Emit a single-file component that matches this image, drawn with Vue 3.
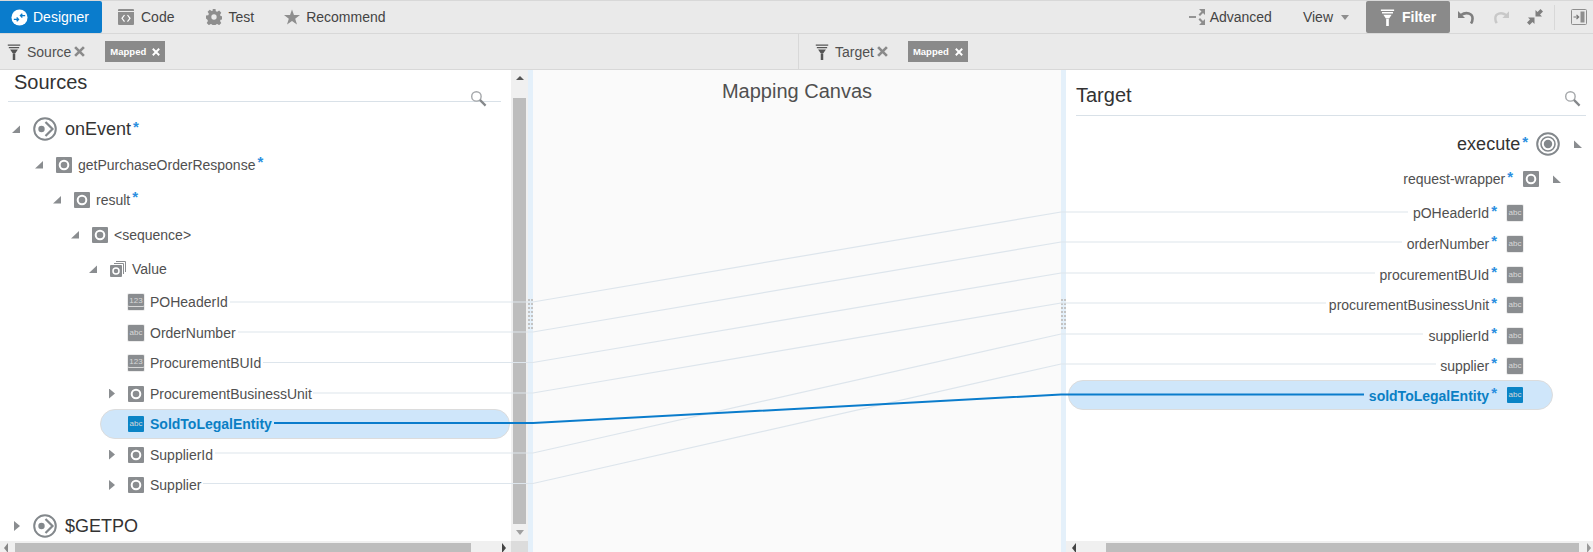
<template>
  <div class="page">
    <svg class="defs" width="0" height="0">
      <symbol id="i-node" viewBox="0 0 16 16">
        <rect width="16" height="16" rx="1" fill="#8a8d90" />
        <circle cx="8" cy="8" r="4.300" fill="none" stroke="#fff" stroke-width="2" />
      </symbol>
      <symbol id="i-stack" viewBox="0 0 16 16">
        <path d="M6 .5h9.500V11M4 2.500h9.500V13" fill="none" stroke="#8a8d90" />
        <rect y="4" width="12" height="12" rx="1" fill="#8a8d90" />
        <circle cx="6" cy="10" r="3" fill="none" stroke="#fff" stroke-width="1.500" />
      </symbol>
      <symbol id="i-event" viewBox="0 0 24 24">
        <circle cx="12" cy="12" r="10.800" fill="none" stroke="#83888c" stroke-width="2" />
        <circle cx="8.500" cy="12" r="3.200" fill="#83888c" />
        <path d="M12.500 5 19.500 12l-7 7" fill="none" stroke="#83888c" stroke-width="2.200" />
      </symbol>
      <symbol id="i-target" viewBox="0 0 24 24">
        <circle cx="12" cy="12" r="10.800" fill="none" stroke="#83888c" stroke-width="2" />
        <circle cx="12" cy="12" r="7" fill="none" stroke="#83888c" stroke-width="1.600" />
        <circle cx="12" cy="12" r="4.200" fill="#83888c" />
      </symbol>
      <symbol id="i-funnel" viewBox="0 0 14 18">
        <path d="M0 .5h14v1.500H0zM1.200 3.300h11.600v1.500H1.200zM2.600 6.100h8.800l-2.700 4H5.300zM5.600 10.500h2.800V18H5.600z" />
      </symbol>
      <symbol id="i-search" viewBox="0 0 18 18">
        <circle cx="6.800" cy="6.800" r="5" fill="none" stroke="#a5a8ab" stroke-width="1.500" />
        <path d="m10.500 10.500 6 6" stroke="#85888b" stroke-width="2.400" />
      </symbol>
      <symbol id="i-x" viewBox="0 0 10 10">
        <path d="m1 1 8 8M9 1 1 9" fill="none" stroke="currentColor" stroke-width="2.400" />
      </symbol>
    </svg>

    <header class="toolbar">
      <button class="tab tab-active">
        <svg class="designer-icon" viewBox="0 0 18 18">
          <circle cx="9" cy="9" r="8.500" fill="#fff" />
          <path d="M3 11h4.500M6 9l2 2-2 2M15 7h-4.500M12 5 10 7l2 2" fill="none" stroke="#0a7ccc" stroke-width="1.400" />
        </svg>
        Designer
      </button>
      <button class="tab">
        <svg class="tab-icon" viewBox="0 0 16 16">
          <rect width="16" height="16" rx="1" fill="#8e8e8e" />
          <rect y="2" width="16" height="1" fill="#ececec" />
          <path d="M6.500 6 4 9.300l2.500 3.300M9.500 6 12 9.300l-2.500 3.300" fill="none" stroke="#fff" stroke-width="1.200" />
        </svg>
        Code
      </button>
      <button class="tab">
        <svg class="tab-icon" viewBox="0 0 18 18">
          <path fill="#8e8e8e" fill-rule="evenodd" d="M7.300 0h3.400l.4 2.500 1.500.7 2.200-1.400 2.400 2.400-1.400 2.200.6 1.500 2.600.4v3.400l-2.600.4-.6 1.500 1.400 2.200-2.400 2.400-2.200-1.400-1.500.6-.4 2.600H7.300l-.4-2.600-1.500-.6-2.200 1.400-2.400-2.400 1.400-2.200-.6-1.500L0 10.700V7.300l2.600-.4.600-1.500-1.400-2.200 2.400-2.400 2.200 1.400 1.500-.7zM9 6a3 3 0 1 0 0 6 3 3 0 0 0 0-6z" />
        </svg>
        Test
      </button>
      <button class="tab">
        <svg class="tab-icon" viewBox="0 0 18 17">
          <path fill="#8e8e8e" d="m9 0 2.200 6.300H18l-5.400 4.100 2 6.600L9 13l-5.600 4 2-6.600L0 6.300h6.800z" />
        </svg>
        Recommend
      </button>

      <div class="toolbar-right">
        <button class="tool-text">
          <svg class="advanced-icon" viewBox="0 0 16 16">
            <path d="M0 8h7" stroke="#777" stroke-width="1.500" />
            <path d="M10 0h6v6l-2-2-3 3-1.500-1.500 3-3zM10 16h6v-6l-2 2-3-3-1.500 1.500 3 3z" fill="#8e8e8e" />
          </svg>
          Advanced
        </button>
        <button class="tool-text view-btn">View <span class="caret"></span></button>
        <button class="filter-btn">
          <svg class="filter-icon"><use href="#i-funnel" /></svg>
          Filter
        </button>
        <div class="tool-icons">
          <svg class="undo" viewBox="0 0 17 14">
            <path d="M0 1v7h7z" fill="#7f7f7f" />
            <path d="M3 5c5-3.500 12-2 11.500 4 0 2-.8 3.500-1.500 4.500" fill="none" stroke="#7f7f7f" stroke-width="2.600" />
          </svg>
          <svg class="redo" viewBox="0 0 17 14">
            <path d="M17 1v7h-7z" fill="#c8c8c8" />
            <path d="M14 5C9 1.500 2 3 2.500 9c0 2 .8 3.500 1.500 4.500" fill="none" stroke="#c8c8c8" stroke-width="2.600" />
          </svg>
          <svg class="shrink" viewBox="0 0 16 16">
            <path d="M13.500 0 16 2.500l-3 3 2 2H8.500V1l2 2zM2.500 16 0 13.500l3-3-2-2h6.500V15l-2-2z" fill="#7f7f7f" />
          </svg>
          <span class="tool-sep"></span>
          <svg class="shrink" viewBox="0 0 16 16">
            <rect x=".5" y=".5" width="15" height="15" rx="1" fill="none" stroke="#8e8e8e" />
            <rect x="9.500" y="2.500" width="4" height="11" fill="#8e8e8e" />
            <path d="M2.500 8h5M5.500 5.800 7.700 8l-2.200 2.200" fill="none" stroke="#777" stroke-width="1.200" />
          </svg>
        </div>
      </div>
    </header>

    <div class="filterbar">
      <div class="filter-left">
        <svg class="funnel"><use href="#i-funnel" /></svg>
        <span>Source</span>
        <svg class="x"><use href="#i-x" /></svg>
        <span class="chip">Mapped <svg class="chip-x"><use href="#i-x" /></svg></span>
      </div>
      <div class="filter-right">
        <svg class="funnel"><use href="#i-funnel" /></svg>
        <span>Target</span>
        <svg class="x"><use href="#i-x" /></svg>
        <span class="chip">Mapped <svg class="chip-x"><use href="#i-x" /></svg></span>
      </div>
    </div>

    <main class="mapper">
      <section class="source">
        <div class="panel-scroll">
          <div class="panel-head">
            <h2>Sources</h2>
            <svg class="search"><use href="#i-search" /></svg>
          </div>
          <div class="tree source-tree">
            <div
              v-for="row in sourceRows"
              :key="row.name"
              class="row"
              :class="{ selected: row.selected, big: row.icon === 'event' }"
              :style="{ height: row.h + 'px', paddingLeft: row.indent + 'px' }"
            >
              <span class="arrow" :class="row.arrow"></span>
              <span v-if="row.icon === 'abc' || row.icon === '123'" class="type" :class="'type-' + row.icon">{{ row.icon }}</span>
              <svg v-else class="node-icon"><use :href="'#i-' + row.icon" /></svg>
              <span class="label">{{ row.name }}</span>
              <span v-if="row.star" class="star-mark">*</span>
            </div>
          </div>
        </div>
        <div class="vbar">
          <span class="up"></span>
          <span class="thumb"></span>
          <span class="down"></span>
        </div>
        <div class="hbar">
          <span class="left"></span>
          <span class="hthumb"></span>
          <span class="right"></span>
        </div>
        <div class="corner"></div>
      </section>

      <div class="splitter"><i class="grip"></i></div>

      <section class="canvas">Mapping Canvas</section>

      <div class="splitter"><i class="grip"></i></div>

      <section class="target">
        <div class="panel-head">
          <h2>Target</h2>
          <svg class="search"><use href="#i-search" /></svg>
        </div>
        <div class="tree target-tree">
          <div
            v-for="row in targetRows"
            :key="row.name"
            class="row"
            :class="{ selected: row.selected, big: row.icon === 'target' }"
            :style="{ height: row.h + 'px', paddingRight: row.indent + 'px' }"
          >
            <span class="label">{{ row.name }}</span>
            <span class="star-mark">*</span>
            <span v-if="row.icon === 'abc'" class="type type-abc">abc</span>
            <svg v-else class="node-icon"><use :href="'#i-' + row.icon" /></svg>
            <span v-if="row.arrow" class="arrow mirror"></span>
          </div>
        </div>
        <div class="hbar">
          <span class="left"></span>
          <span class="hthumb"></span>
          <span class="right"></span>
        </div>
      </section>

      <!-- линии маппинга поверх всех колонок -->
      <svg class="links" width="1593" height="482" viewBox="0 70 1593 482">
        <path
          v-for="link in links"
          :key="link.d"
          :d="link.d"
          fill="none"
          :stroke="link.active ? '#0a7ccc' : '#dde5ec'"
          :stroke-width="link.active ? 2 : 1.200"
        />
      </svg>
    </main>
  </div>
</template>

<script setup>
const sourceRows = [
  { name: 'onEvent', icon: 'event', arrow: 'open', indent: 10, h: 36, star: true },
  { name: 'getPurchaseOrderResponse', icon: 'node', arrow: 'open', indent: 33, h: 35, star: true },
  { name: 'result', icon: 'node', arrow: 'open', indent: 51, h: 35, star: true },
  { name: '<sequence>', icon: 'node', arrow: 'open', indent: 69, h: 35 },
  { name: 'Value', icon: 'stack', arrow: 'open', indent: 87, h: 34 },
  { name: 'POHeaderId', icon: '123', arrow: 'none', indent: 105, h: 32 },
  { name: 'OrderNumber', icon: 'abc', arrow: 'none', indent: 105, h: 30 },
  { name: 'ProcurementBUId', icon: '123', arrow: 'none', indent: 105, h: 30 },
  { name: 'ProcurementBusinessUnit', icon: 'node', arrow: 'closed', indent: 105, h: 31 },
  { name: 'SoldToLegalEntity', icon: 'abc', arrow: 'none', indent: 105, h: 30, selected: true },
  { name: 'SupplierId', icon: 'node', arrow: 'closed', indent: 105, h: 31 },
  { name: 'Supplier', icon: 'node', arrow: 'closed', indent: 105, h: 30 },
  { name: '$GETPO', icon: 'event', arrow: 'closed', indent: 10, h: 52 },
]

const targetRows = [
  { name: 'execute', icon: 'target', arrow: true, indent: 9, h: 36 },
  { name: 'request-wrapper', icon: 'node', arrow: true, indent: 30, h: 34 },
  { name: 'pOHeaderId', icon: 'abc', indent: 70, h: 30 },
  { name: 'orderNumber', icon: 'abc', indent: 70, h: 31 },
  { name: 'procurementBUId', icon: 'abc', indent: 70, h: 31 },
  { name: 'procurementBusinessUnit', icon: 'abc', indent: 70, h: 30 },
  { name: 'supplierId', icon: 'abc', indent: 70, h: 31 },
  { name: 'supplier', icon: 'abc', indent: 70, h: 29 },
  { name: 'soldToLegalEntity', icon: 'abc', indent: 70, h: 30, selected: true },
]

// x начала, y слева, y справа, x конца
const links = [
  [230, 302, 212, 1408],
  [238, 332, 242, 1402],
  [263, 362.500, 273, 1375],
  [313, 393, 303, 1326],
  [215, 453, 334, 1423],
  [203, 483.500, 364, 1436],
  [274, 423, 394.500, 1364, true],
].map(([x1, y1, y2, x2, active]) => ({
  d: `M${x1} ${y1}H533L1061 ${y2}H${x2}`,
  active,
}))
</script>

<style>
html,
body {
  margin: 0;
  background: #fff;
  overflow: hidden;
}
</style>

<style scoped>
.page {
  width: 1593px;
  height: 552px;
  display: flex;
  flex-direction: column;
  font-family: "Liberation Sans", Arial, sans-serif;
  font-size: 14px;
  color: #505050;
  overflow: hidden;
}

.defs {
  position: absolute;
}

button {
  font: inherit;
  color: inherit;
  background: none;
  border: 0;
  padding: 0;
  display: flex;
  align-items: center;
}

.toolbar {
  height: 32px;
  flex: none;
  display: flex;
  align-items: stretch;
  background: #eaeaea;
  border-top: 1px solid #d8d8d8;
  border-bottom: 1px solid #d8d8d8;
}

.tab {
  gap: 6px;
  color: #444;
}

.tab-active {
  width: 102px;
  padding-left: 11px;
  gap: 5px;
  background: #0a7ccc;
  color: #fff;
  border-radius: 0 2px 2px 0;
  margin-right: 16px;
}

.designer-icon {
  width: 17px;
  height: 17px;
}

.tab-icon {
  width: 16px;
  height: 16px;
}

.tab:nth-child(2) {
  gap: 7px;
  padding-right: 32px;
}

.tab:nth-child(3) {
  padding-right: 30px;
}

.toolbar-right {
  margin-left: auto;
  display: flex;
  align-items: stretch;
}

.tool-text {
  color: #444;
  gap: 5px;
}

.advanced-icon {
  width: 16px;
  height: 16px;
}

.view-btn {
  margin-left: 31px;
  gap: 8px;
}

.caret {
  width: 0;
  height: 0;
  border: 4.500px solid transparent;
  border-top: 5px solid #8e8e8e;
  border-bottom: 0;
}

.filter-btn {
  width: 84px;
  margin-left: 17px;
  padding-left: 14px;
  gap: 7px;
  background: #8a8a8a;
  color: #fff;
  font-weight: 700;
  border-radius: 2px;
  box-sizing: border-box;
}

.filter-icon {
  width: 15px;
  height: 17px;
  fill: #fff;
}

.tool-icons {
  width: 143px;
  padding-left: 8px;
  display: flex;
  align-items: center;
  gap: 18px;
  box-sizing: border-box;
}

.undo {
  width: 17px;
  height: 14px;
}

.redo {
  width: 16px;
  height: 14px;
}

.shrink {
  width: 16px;
  height: 16px;
}

.tool-sep {
  width: 1px;
  height: 25px;
  margin: 0 -2px 0 -7px;
  background: #d8d8d8;
}

.filterbar {
  height: 35px;
  flex: none;
  display: grid;
  grid-template-columns: 798px 1fr;
  background: #eaeaea;
  border-bottom: 1px solid #d8d8d8;
}

.filter-left,
.filter-right {
  display: flex;
  align-items: center;
  padding-left: 7px;
}

.filter-right {
  padding-left: 16px;
  border-left: 1px solid #d8d8d8;
}

.funnel {
  width: 14px;
  height: 16px;
  fill: #555;
  margin-right: 6px;
}

.x {
  width: 11px;
  height: 11px;
  margin-left: 3px;
  color: #8a8a8a;
}

.chip {
  width: 60px;
  height: 21px;
  margin-left: 20px;
  padding-left: 5px;
  box-sizing: border-box;
  display: flex;
  align-items: center;
  gap: 6px;
  background: #8a8a8a;
  color: #fff;
  font-size: 9.500px;
  font-weight: 700;
}

.chip-x {
  width: 8px;
  height: 8px;
}

.mapper {
  position: relative;
  flex: 1;
  min-height: 0;
  display: flex;
  background: #fff;
}

.source {
  width: 528px;
  flex: none;
  display: grid;
  grid-template-columns: 511px 17px;
  grid-template-rows: 471px 11px;
}

.panel-scroll {
  min-height: 0;
  overflow: hidden;
}

.target {
  width: 527px;
  flex: none;
  display: flex;
  flex-direction: column;
}

.panel-head {
  position: relative;
  box-sizing: border-box;
  border-bottom: 1px solid #d9e1e8;
}

.source .panel-head {
  width: 493px;
  height: 32px;
  margin-left: 8px;
  padding-left: 6px;
}

.target .panel-head {
  height: 46px;
  margin: 0 7px 0 10px;
}

h2 {
  margin: 0;
  font-size: 20px;
  font-weight: 400;
  color: #333;
  line-height: 24px;
}

.target h2 {
  padding-top: 13px;
}

.search {
  position: absolute;
  width: 17px;
  height: 17px;
  right: 14px;
  bottom: -6px;
}

.target .search {
  right: 5px;
  bottom: 8px;
}

.source-tree {
  padding-top: 9px;
}

.target-tree {
  flex: 1;
  min-height: 0;
  padding-top: 10px;
}

.row {
  position: relative;
  display: flex;
  align-items: center;
  box-sizing: border-box;
  white-space: nowrap;
}

.row.big {
  font-size: 18px;
  color: #333;
}

.arrow {
  width: 10px;
  height: 10px;
  flex: none;
  margin-right: 13px;
}

.arrow.open {
  background: #8a8d90;
  clip-path: polygon(100% 15%, 100% 90%, 20% 90%);
}

.arrow.closed {
  background: #8a8d90;
  clip-path: polygon(40% 0, 100% 50%, 40% 100%);
}

.arrow.mirror {
  background: #8a8d90;
  clip-path: polygon(0 15%, 0 90%, 80% 90%);
  margin: 0 0 0 14px;
}

.node-icon {
  width: 16px;
  height: 16px;
  flex: none;
}

.big .node-icon {
  width: 24px;
  height: 24px;
}

.type {
  width: 16px;
  height: 16px;
  flex: none;
  border-radius: 1px;
  background: #8a8d90;
  color: #d8d8d8;
  font-size: 8px;
  line-height: 16px;
  text-align: center;
  box-shadow: 0 0 0 1px #ececec;
}

.type-123 {
  line-height: 13px;
  box-shadow: 0 0 0 1px #ececec, inset 0 -3px 0 #8a8d90, inset 0 -4px 0 #d8d8d8;
}

.label {
  margin-left: 6px;
}

.big .label {
  margin-left: 8px;
  padding-top: 1px;
}

.star-mark {
  color: #2b8fe0;
  font-size: 15px;
  font-weight: 700;
  line-height: 1;
  margin-left: 2px;
  margin-top: -6px;
}

.row.selected::before {
  content: "";
  position: absolute;
  top: 0;
  bottom: 0;
  box-sizing: border-box;
  background: #cfe6fa;
  border: 1px solid #dcdcdc;
  border-radius: 15px;
}

.source-tree .row.selected::before {
  left: 100px;
  width: 410px;
}

.target-tree .row.selected::before {
  left: 2px;
  width: 485px;
}

.row.selected > * {
  position: relative;
}

.selected .label {
  color: #0a7fc4;
  font-weight: 700;
}

.selected .type {
  background: #0a84c6;
  box-shadow: none;
}

.target-tree .row {
  justify-content: flex-end;
}

.target-tree .row:nth-child(2) {
  margin-bottom: 2px;
}

.target-tree .selected .label {
  padding-top: 2px;
}

.target-tree .label {
  margin-left: 0;
}

.target-tree .type,
.target-tree .node-icon {
  margin-left: 10px;
}

.target-tree .big .node-icon {
  margin-left: 8px;
}

.vbar {
  background: #f0f0f0;
  display: flex;
  flex-direction: column;
  align-items: center;
}

.up,
.down {
  width: 0;
  height: 0;
  border: 4px solid transparent;
}

.up {
  margin: 6px 0 18px;
  border-top: 0;
  border-bottom: 4px solid #555;
}

.thumb {
  flex: 1;
  width: 13px;
  background: #bdbdbd;
}

.down {
  margin: 6px 0 6px;
  border-bottom: 0;
  border-top: 5px solid #a0a0a0;
}

.corner {
  background: #dcdcdc;
}

.hbar {
  height: 11px;
  flex: none;
  display: flex;
  align-items: flex-end;
  background: #f0f0f0;
  overflow: hidden;
}

.left,
.right {
  width: 0;
  height: 0;
  margin-bottom: -1px;
  border: 5px solid transparent;
}

.left {
  margin-left: 4px;
  border-left: 0;
  border-right: 4px solid #888;
}

.right {
  margin-left: auto;
  margin-right: 5px;
  border-right: 0;
  border-left: 4px solid #444;
}

.target .left {
  margin-left: 6px;
  border-right-color: #444;
}

.target .right {
  margin-right: 2px;
  border-left-color: #999;
}

.hthumb {
  height: 9px;
  margin-left: 7px;
  background: #bdbdbd;
}

.source .hthumb {
  width: 456px;
}

.target .hthumb {
  width: 473px;
  margin-left: 30px;
}

.splitter {
  width: 5px;
  flex: none;
  position: relative;
  background: #e4f0fa;
}

.grip {
  position: absolute;
  top: 229px;
  left: 0;
  width: 5px;
  height: 30px;
  background: repeating-linear-gradient(90deg, #c4c4c4 0 2px, transparent 2px 3px);
  mask-image: repeating-linear-gradient(#000 0 2px, transparent 2px 4px);
}

.canvas {
  flex: 1;
  min-width: 0;
  background: #fafafa;
  text-align: center;
  font-size: 20px;
  padding-top: 10px;
}

.links {
  position: absolute;
  top: 0;
  left: 0;
  pointer-events: none;
}
</style>
